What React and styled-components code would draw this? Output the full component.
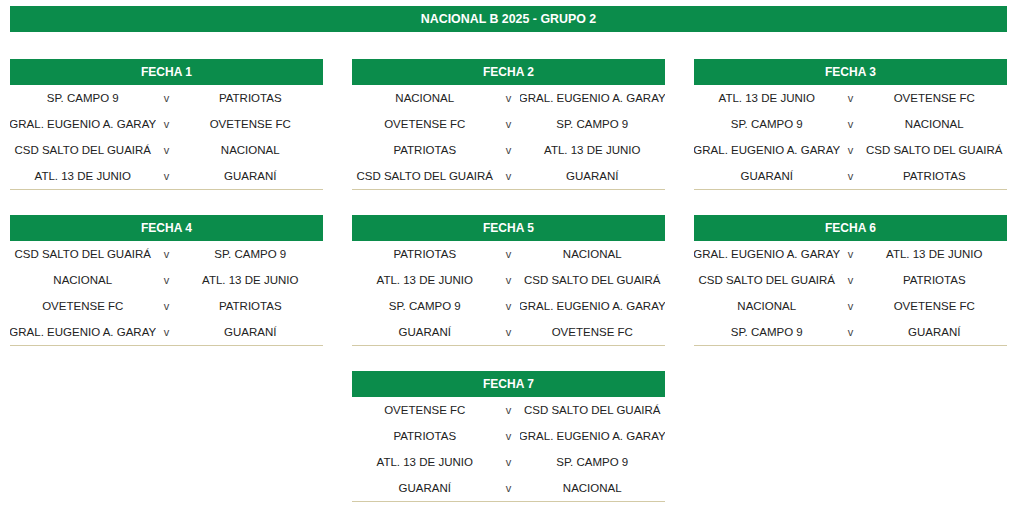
import React from 'react';
import styled, { createGlobalStyle } from 'styled-components';

const GlobalStyle = createGlobalStyle`
  * {
    margin: 0;
    padding: 0;
    box-sizing: border-box;
  }

  body {
    background-color: #ffffff;
    font-family: "Liberation Sans", Arial, sans-serif;
  }
`;

const Page = styled.div`
  width: 1024px;
  padding: 6px 17px 0 10px;
`;

const Banner = styled.div`
  height: 26px;
  background-color: #0b8c4b;
  color: #ffffff;
  font-size: 12.4px;
  font-weight: 700;
  display: flex;
  align-items: center;
  justify-content: center;
`;

const Grid = styled.div`
  display: grid;
  grid-template-columns: repeat(3, 1fr);
  column-gap: 29px;
  row-gap: 25px;
  margin-top: 27px;
`;

const Card = styled.div`
  grid-column: ${(p) => (p.$center ? '2' : 'auto')};
  border-bottom: 1.5px solid #d3caa6;
`;

const CardHeader = styled.div`
  height: 26px;
  background-color: #0b8c4b;
  color: #ffffff;
  font-size: 12px;
  font-weight: 700;
  display: flex;
  align-items: center;
  justify-content: center;
`;

const Row = styled.div`
  height: 26px;
  display: grid;
  grid-template-columns: 1fr 22px 1fr;
  align-items: center;
  font-size: 11.5px;
  color: #222222;
`;

const Team = styled.div`
  white-space: nowrap;
  overflow: hidden;
  display: flex;
  justify-content: center;
`;

const Versus = styled.div`
  text-align: center;
  font-size: 11px;
  color: #444444;
`;

const fechas = [
  {
    n: 1,
    m: [
      ['SP. CAMPO 9', 'PATRIOTAS'],
      ['GRAL. EUGENIO A. GARAY', 'OVETENSE FC'],
      ['CSD SALTO DEL GUAIRÁ', 'NACIONAL'],
      ['ATL. 13 DE JUNIO', 'GUARANÍ'],
    ],
  },
  {
    n: 2,
    m: [
      ['NACIONAL', 'GRAL. EUGENIO A. GARAY'],
      ['OVETENSE FC', 'SP. CAMPO 9'],
      ['PATRIOTAS', 'ATL. 13 DE JUNIO'],
      ['CSD SALTO DEL GUAIRÁ', 'GUARANÍ'],
    ],
  },
  {
    n: 3,
    m: [
      ['ATL. 13 DE JUNIO', 'OVETENSE FC'],
      ['SP. CAMPO 9', 'NACIONAL'],
      ['GRAL. EUGENIO A. GARAY', 'CSD SALTO DEL GUAIRÁ'],
      ['GUARANÍ', 'PATRIOTAS'],
    ],
  },
  {
    n: 4,
    m: [
      ['CSD SALTO DEL GUAIRÁ', 'SP. CAMPO 9'],
      ['NACIONAL', 'ATL. 13 DE JUNIO'],
      ['OVETENSE FC', 'PATRIOTAS'],
      ['GRAL. EUGENIO A. GARAY', 'GUARANÍ'],
    ],
  },
  {
    n: 5,
    m: [
      ['PATRIOTAS', 'NACIONAL'],
      ['ATL. 13 DE JUNIO', 'CSD SALTO DEL GUAIRÁ'],
      ['SP. CAMPO 9', 'GRAL. EUGENIO A. GARAY'],
      ['GUARANÍ', 'OVETENSE FC'],
    ],
  },
  {
    n: 6,
    m: [
      ['GRAL. EUGENIO A. GARAY', 'ATL. 13 DE JUNIO'],
      ['CSD SALTO DEL GUAIRÁ', 'PATRIOTAS'],
      ['NACIONAL', 'OVETENSE FC'],
      ['SP. CAMPO 9', 'GUARANÍ'],
    ],
  },
  {
    n: 7,
    m: [
      ['OVETENSE FC', 'CSD SALTO DEL GUAIRÁ'],
      ['PATRIOTAS', 'GRAL. EUGENIO A. GARAY'],
      ['ATL. 13 DE JUNIO', 'SP. CAMPO 9'],
      ['GUARANÍ', 'NACIONAL'],
    ],
  },
];

const App = () => (
  <>
    <GlobalStyle />
    <Page>
      <Banner>NACIONAL B 2025 - GRUPO 2</Banner>
      <Grid>
        {fechas.map((f) => (
          <Card key={f.n} $center={f.n === 7}>
            <CardHeader>FECHA {f.n}</CardHeader>
            {f.m.map(([home, away]) => (
              <Row key={home}>
                <Team>{home}</Team>
                <Versus>v</Versus>
                <Team>{away}</Team>
              </Row>
            ))}
          </Card>
        ))}
      </Grid>
    </Page>
  </>
);

export default App;
